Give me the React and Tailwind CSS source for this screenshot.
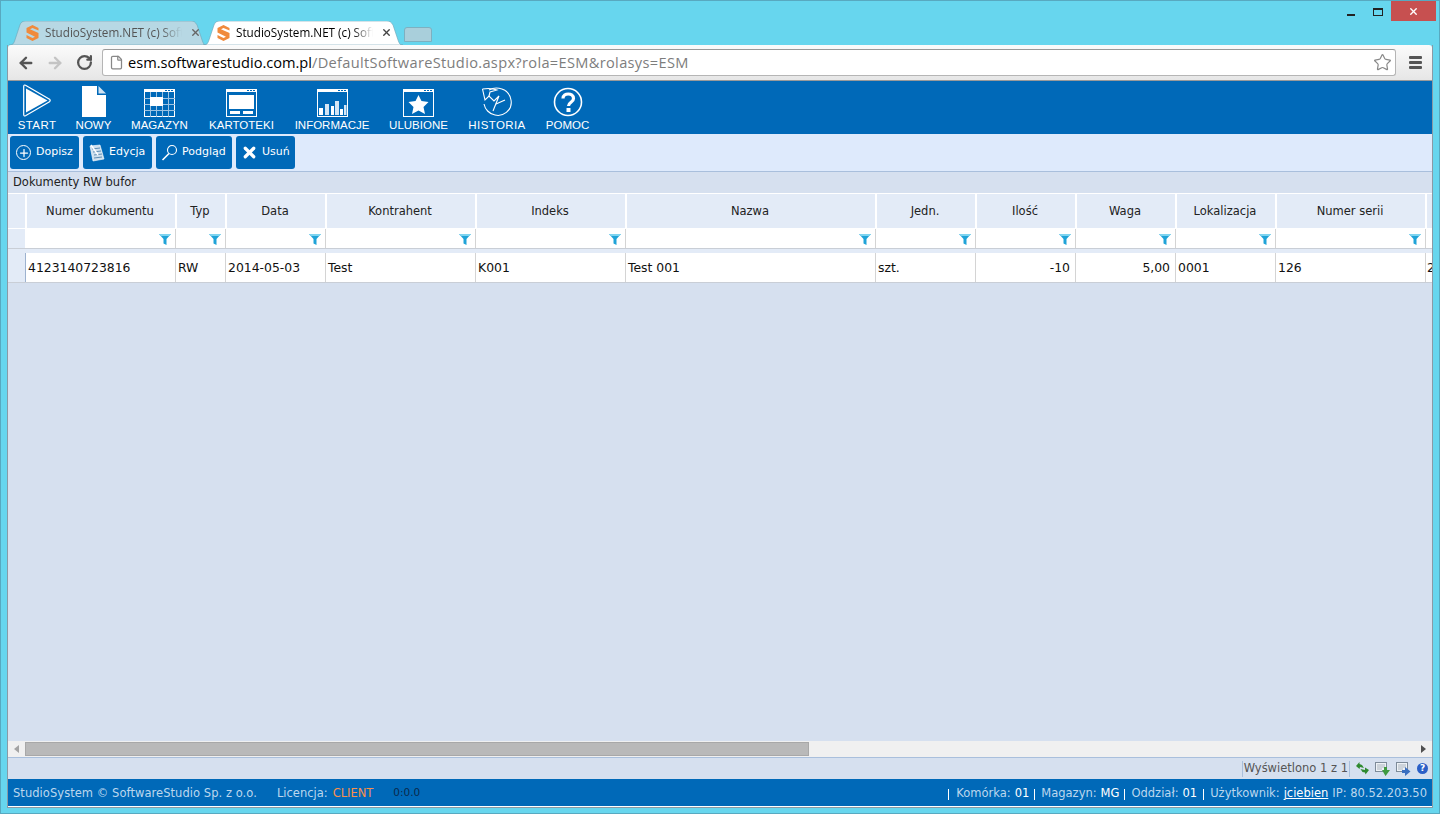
import { ArrowLeft, ArrowRight, RotateCw, File, Star, Plus, X } from "lucide-react"

const headCols = "grid grid-cols-[19px_150px_50px_100px_150px_150px_250px_100px_100px_100px_100px_150px_5px]"
const bodyCols = "grid grid-cols-[18px_150px_50px_100px_150px_150px_250px_100px_100px_100px_100px_150px_6px]"

const headers = ["Numer dokumentu", "Typ", "Data", "Kontrahent", "Indeks", "Nazwa", "Jedn.", "Ilość", "Waga", "Lokalizacja", "Numer serii"]

const row = [
    ["4123140723816", "left"],
    ["RW", "left"],
    ["2014-05-03", "left"],
    ["Test", "left"],
    ["K001", "left"],
    ["Test 001", "left"],
    ["szt.", "left"],
    ["-10", "right"],
    ["5,00", "right"],
    ["0001", "left"],
    ["126", "left"],
]

function Logo() {
    return (
        <svg width="13" height="16" viewBox="0 0 13 16" className="shrink-0">
            <path d="M0.5 7.5 L0.5 3 L6.5 0 L12.5 3 L12.5 5.5 L6.5 3 L4 4.2 L12.5 8 L12.5 13 L6.5 16 L0.5 13 L0.5 10 L6.5 13 L9 11.8 Z" fill="#f08a3c" />
        </svg>
    )
}

function Tab({ active, className }) {
    return (
        <div className={`relative flex items-center h-6 ${className}`}>
            <svg className="absolute inset-0 w-full h-full" viewBox="0 0 200 24" preserveAspectRatio="none">
                <path
                    d="M0 24 L1 24 C4 24 5 22 6 19 L11 4 C12 1 14 0 17 0 L184 0 C187 0 188 1 190 4 L195 19 C196 22 197 24 199 24 L200 24 Z"
                    fill={active ? "#ffffff" : "#b7d8e4"}
                    stroke="#6ea3b5"
                    strokeWidth="0.6"
                />
            </svg>
            <div className="relative flex items-center">
                <Logo />
                <span className={`ml-[6px] w-[137px] overflow-hidden whitespace-nowrap font-['Open_Sans',sans-serif] text-[11.7px] [mask-image:linear-gradient(to_right,black_85%,transparent)] ${active ? "text-black" : "text-[#555]"}`}>
                    StudioSystem.NET (c) SoftwareStudio
                </span>
                <X size={11} strokeWidth={3} className={`ml-[8px] ${active ? "text-[#444]" : "text-[#666]"}`} />
            </div>
        </div>
    )
}

function IconStart() {
    return (
        <svg width="28" height="33" viewBox="0 0 28 33">
            <path d="M2.5 1.2 L26.5 15.2 Q27.8 16.5 26.5 17.8 L2.5 31.8 Q0.7 32.5 0.7 30.5 L0.7 2.5 Q0.7 0.5 2.5 1.2 Z" fill="none" stroke="#fff" strokeWidth="1.2" />
            <path d="M3 4.5 L24.5 16.5 L3 28.5 Z" fill="#fff" />
        </svg>
    )
}

function IconNowy() {
    return (
        <svg width="24" height="31" viewBox="0 0 24 31">
            <path d="M0 0 L15 0 L15 9 L24 9 L24 31 L0 31 Z" fill="#fff" />
            <path d="M16.5 0 L24 7.5 L16.5 7.5 Z" fill="#cfe2f2" />
        </svg>
    )
}

function WindowFrame({ children }) {
    return (
        <svg width="31" height="28" viewBox="0 0 31 28">
            <rect x="0.5" y="0.5" width="30" height="27" fill="none" stroke="#fff" />
            <rect x="0" y="0" width="31" height="3" fill="#fff" />
            <rect x="21" y="1" width="2" height="1" fill="#0069b8" />
            <rect x="24" y="1" width="2" height="1" fill="#0069b8" />
            <rect x="27" y="1" width="2" height="1" fill="#0069b8" />
            {children}
        </svg>
    )
}

function IconMagazyn() {
    return (
        <WindowFrame>
            <path d="M0.5 9.5 H31 M0.5 15.5 H31 M0.5 21.5 H31 M6.5 3 V28 M12.5 3 V28 M18.5 3 V28 M24.5 3 V28" stroke="#9cc3e3" />
            <rect x="6" y="8" width="13" height="9" fill="#fff" />
        </WindowFrame>
    )
}

function IconKartoteki() {
    return (
        <WindowFrame>
            <rect x="3" y="6" width="25" height="14" fill="#fff" />
            <rect x="4" y="22" width="10" height="3" fill="#fff" />
            <rect x="17" y="22" width="10" height="3" fill="#fff" />
        </WindowFrame>
    )
}

function IconInformacje() {
    return (
        <WindowFrame>
            <path d="M2 26 V19 H6 V26 Z M14 26 V17 H17 V26 Z M23 26 V20 H26 V26 Z" fill="#fff" />
            <path d="M8 26 V15 H12 V26 Z M18 26 V12 H22 V26 Z M27 26 V16 H29.5 V26 Z" fill="#d5e6f5" />
        </WindowFrame>
    )
}

function IconUlubione() {
    return (
        <WindowFrame>
            <path d="M15.5 6 L18.5 12 L25.5 13 L20.5 18 L22 25 L15.5 21.5 L9 25 L10.5 18 L5.5 13 L12.5 12 Z" fill="#fff" />
        </WindowFrame>
    )
}

function IconHistoria() {
    return (
        <svg width="31" height="30" viewBox="0 0 31 30" fill="none" stroke="#fff" strokeWidth="1.1">
            <path d="M7 3 C14 -1 27 1 29 13 C31 24 20 30 13 28 C7 27 3 22 2 17" />
            <path d="M0.5 2 L3 13 L7 9 L12 14 L17 9 L11 24" />
            <path d="M0.5 2 C6 1 10 1 15 3 L8 5 L7 9" />
            <path d="M14 17 L23 13" />
        </svg>
    )
}

function IconPomoc() {
    return (
        <svg width="30" height="30" viewBox="0 0 30 30" fill="none">
            <circle cx="15" cy="15" r="13.5" stroke="#fff" strokeWidth="1.6" />
            <path d="M10 11.5 C10 5.5 20.5 5.5 20.5 11.5 C20.5 15.5 15.5 15 15.5 19" stroke="#fff" strokeWidth="3.2" />
            <rect x="13.5" y="21" width="4" height="4" fill="#fff" />
        </svg>
    )
}

const navItems = [
    { label: "START", icon: <IconStart />, width: "w-[38px]", text: "tracking-[0.4px]" },
    { label: "NOWY", icon: <IconNowy />, width: "w-[35px]", text: "" },
    { label: "MAGAZYN", icon: <IconMagazyn />, width: "w-[57px]", text: "" },
    { label: "KARTOTEKI", icon: <IconKartoteki />, width: "w-[67px]", text: "" },
    { label: "INFORMACJE", icon: <IconInformacje />, width: "w-[74px]", text: "" },
    { label: "ULUBIONE", icon: <IconUlubione />, width: "w-[59px]", text: "" },
    { label: "HISTORIA", icon: <IconHistoria />, width: "w-[58px]", text: "tracking-[0.4px]" },
    { label: "POMOC", icon: <IconPomoc />, width: "w-[43px]", text: "" },
]

function IconEdycja() {
    return (
        <svg width="16" height="18" viewBox="0 0 16 18">
            <path d="M1 2 L11 1 L15 15 L4 17 Z" fill="#cfe0ee" stroke="#fff" strokeWidth="0.6" />
            <path d="M3 5 L11 4 M4 8 L12 7 M5 11 L13 10 M5 14 L13 13" stroke="#5f8db3" />
            <path d="M2 1 L9 11" stroke="#fff" strokeWidth="1.4" />
        </svg>
    )
}

function IconPodglad() {
    return (
        <svg width="17" height="17" viewBox="0 0 17 17" fill="none" stroke="#fff">
            <circle cx="11" cy="6" r="4.5" strokeWidth="1.1" />
            <path d="M8 9.5 L1.5 16" strokeWidth="1.6" />
        </svg>
    )
}

function ActionButton({ icon, label, className }) {
    return (
        <button className={`flex items-center h-[33px] bg-[#0069b8] rounded-[3px] text-white font-['DejaVu_Sans',sans-serif] text-[11px] ${className}`}>
            {icon}
            <span>{label}</span>
        </button>
    )
}

function Funnel() {
    return (
        <svg width="12" height="11" viewBox="0 0 12 11" className="absolute right-[4px] top-[5px]">
            <path d="M0 0 H12 L7.5 5 V11 L4.5 9.5 V5 Z" fill="#1fa3d8" />
            <path d="M0 0 H12 L10.5 2 H1.5 Z" fill="#7fd4f0" />
        </svg>
    )
}

function IconRefresh() {
    return (
        <svg width="13" height="13" viewBox="0 0 13 13">
            <path d="M0 4 L3.5 0 L3.5 2 L6 3 L8 6 L4 5 L3.5 7 Z" fill="#2f8a2f" />
            <path d="M13 8 L9.5 12.5 L9 10.5 L6.5 10 L4.5 7 L9 8 L9 5.5 Z" fill="#2f8a2f" />
        </svg>
    )
}

function IconStatusDoc({ color, arrow }) {
    return (
        <svg width="15" height="14" viewBox="0 0 15 14">
            <rect x="0.5" y="0.5" width="11" height="9" fill="#eef2f6" stroke="#7d8b99" />
            <path d="M2 3 H10 M2 5 H10 M2 7 H7" stroke="#aab4be" />
            <path d={arrow} fill={color} />
        </svg>
    )
}

export default function App() {
    return (
        <div className="relative w-[1440px] h-[814px] overflow-hidden bg-[#67d6ee] border border-[#58a9c0] flex flex-col">
            <div className="absolute top-0 right-[3px] flex items-start">
                <div className="w-[8px] h-[2px] bg-[#222] mt-[13px] mr-[18px]" />
                <div className="w-[10px] h-[8px] border border-[#222] border-t-2 mt-[7px] mr-[8px]" />
                <div className="w-[45px] h-[20px] bg-[#c75050] flex items-center justify-center">
                    <X size={11} strokeWidth={3} className="text-white" />
                </div>
            </div>

            <div className="h-[44px] flex items-end pl-[8px] shrink-0">
                <Tab className="w-[198px] pl-[17px]" />
                <Tab active className="w-[200px] -ml-[4px] pl-[14px]" />
                <div className="w-[28px] h-[15px] mb-[3px] ml-[1px] bg-[#a9cfdb] border border-[#7db0c0] rounded-t-[3px] skew-x-[20px]" />
            </div>

            <div className="flex-1 mx-[6px] mb-[5px] flex flex-col border border-[#8a9aa5] border-t-0 min-h-0">
                <div className="h-[36px] shrink-0 bg-gradient-to-b from-[#fbfbfb] to-[#e6e6e6] rounded-t-[3px] flex items-center pl-[9px] pr-[10px] border-b border-[#9a9a9a]">
                    <ArrowLeft size={18} strokeWidth={3.2} className="text-[#555]" />
                    <ArrowRight size={18} strokeWidth={3.2} className="text-[#c4c4c4] ml-[11px]" />
                    <RotateCw size={17} strokeWidth={3.2} className="text-[#555] ml-[12px]" />
                    <div className="ml-[9px] flex-1 h-[27px] bg-white border border-[#b5b5b5] border-t-[#999] rounded-[3px] flex items-center pl-[6px] pr-[3px]">
                        <File size={15} className="text-[#888]" />
                        <span className="ml-[4px] font-['Open_Sans',sans-serif] text-[14.6px] text-black whitespace-nowrap">esm.softwarestudio.com.pl</span>
                        <span className="font-['Open_Sans',sans-serif] text-[14.6px] tracking-[0.33px] text-[#7d7d7d] whitespace-nowrap">/DefaultSoftwareStudio.aspx?rola=ESM&amp;rolasys=ESM</span>
                        <Star size={19} strokeWidth={1.5} className="ml-auto text-[#888]" />
                    </div>
                    <div className="ml-[13px] w-[13px] flex flex-col gap-[2px]">
                        <span className="h-[3px] bg-[#555] rounded-[1px]" />
                        <span className="h-[3px] bg-[#555] rounded-[1px]" />
                        <span className="h-[3px] bg-[#555] rounded-[1px]" />
                    </div>
                </div>

                <div className="h-[53px] shrink-0 bg-[#0069b8] flex gap-5 pl-[10px] font-['Liberation_Sans',sans-serif] text-[11.5px] text-white">
                    {navItems.map((item) => (
                        <div key={item.label} className={`flex flex-col items-center ${item.width}`}>
                            <div className="h-[38px] flex items-end pb-[2px]">{item.icon}</div>
                            <span className={`leading-[13px] whitespace-nowrap ${item.text}`}>{item.label}</span>
                        </div>
                    ))}
                </div>

                <div className="h-[38px] shrink-0 bg-[#deeafc] border-b border-[#a9bfdc] flex items-start gap-1 pl-[2px] pt-[2px]">
                    <ActionButton className="w-[69px] pl-[6px] gap-[5px]" label="Dopisz" icon={
                        <span className="w-[15px] h-[15px] rounded-full border border-white flex items-center justify-center"><Plus size={12} strokeWidth={2.5} /></span>
                    } />
                    <ActionButton className="w-[69px] pl-[6px] gap-[4px]" label="Edycja" icon={<IconEdycja />} />
                    <ActionButton className="w-[76px] pl-[5px] gap-[4px]" label="Podgląd" icon={<IconPodglad />} />
                    <ActionButton className="w-[59px] pl-[5px] gap-[4px]" label="Usuń" icon={<X size={17} strokeWidth={4.5} />} />
                </div>

                <div className="flex-1 min-h-0 bg-[#d6e0ef] flex flex-col font-['DejaVu_Sans',sans-serif]">
                    <div className="h-[21px] shrink-0 pl-[5px] pt-[1px] flex items-center text-[11.5px] text-[#222]">Dokumenty RW bufor</div>

                    <div className="flex-1 min-h-0 overflow-hidden">
                        <div className={`${headCols} h-[35px] border-t border-white text-[11.5px] text-[#222]`}>
                            <div className="bg-[#e3ebf7] border-r-2 border-white" />
                            {headers.map((h) => (
                                <div key={h} className="bg-[#e3ebf7] border-r-2 border-white flex items-center justify-center pt-[2px] pr-[2px]">{h}</div>
                            ))}
                            <div className="bg-[#e3ebf7]" />
                        </div>
                        <div className={`${bodyCols} h-[21px] border-t border-white border-b border-b-[#c9ced6]`}>
                            <div className="bg-[#e3ebf7] border-r border-white" />
                            {headers.map((h) => (
                                <div key={h} className="relative bg-white border-r border-[#d4d4d4]"><Funnel /></div>
                            ))}
                            <div className="bg-white" />
                        </div>
                        <div className="h-[4px] bg-[#e3ebf7]" />
                        <div className={`${bodyCols} h-[30px] border-b border-[#c9ced6] text-[12.4px] text-[#111]`}>
                            <div className="bg-[#e3ebf7] border-r border-[#9db2cf]" />
                            {row.map(([v, align]) => (
                                <div key={v} className={`bg-white border-r border-[#d4d4d4] flex items-center pt-[1px] ${align === "right" ? "justify-end pr-[5px]" : "pl-[2px]"}`}>{v}</div>
                            ))}
                            <div className="bg-white pl-[1px] flex items-center overflow-hidden pt-[1px]">2</div>
                        </div>
                    </div>

                    <div className="h-[17px] shrink-0 bg-[#f0f0f0] flex items-center border-b border-[#a9bfdc]">
                        <div className="w-[17px] flex justify-center">
                            <span className="w-0 h-0 border-y-[4px] border-y-transparent border-r-[5px] border-r-[#a3a3a3]" />
                        </div>
                        <div className="w-[784px] h-[14px] bg-[#b9b9b9] border border-[#a8a8a8]" />
                        <div className="ml-auto w-[17px] flex justify-center">
                            <span className="w-0 h-0 border-y-[4px] border-y-transparent border-l-[5px] border-l-[#505050]" />
                        </div>
                    </div>

                    <div className="h-[21px] shrink-0 flex items-center justify-end pr-[4px]">
                        <div className="h-[16px] border-x border-[#a9bfdc] pl-[1px] pr-[1px] flex items-center text-[11.5px] text-[#555]">Wyświetlono 1 z 1</div>
                        <div className="ml-[6px] flex items-center gap-[6px]">
                            <IconRefresh />
                            <IconStatusDoc color="#3f9a3f" arrow="M7 8 H9 V5 H12 V8 H15 L10.5 14 Z" />
                            <IconStatusDoc color="#3a6fc0" arrow="M6 8 H9 V5 L14.5 9.5 L9 14 V11 H6 Z" />
                            <span className="w-[11px] h-[11px] rounded-full bg-[#2a5fc7] flex items-center justify-center text-[9px] font-bold text-white leading-none">?</span>
                        </div>
                    </div>

                    <div className="h-[28px] shrink-0 bg-[#0069b8] flex items-center pl-[5px] pr-[5px] pt-[3px] text-[11.5px] text-[#bcd7ee] border-b border-white">
                        <span className="tracking-[0.05px]">StudioSystem © SoftwareStudio Sp. z o.o.</span>
                        <span className="ml-[20px]">Licencja:</span>
                        <span className="ml-[5px] text-[#f9904a]">CLIENT</span>
                        <span className="ml-[20px] -mt-[2px] text-[10.5px] text-[#0a2a4d]">0:0.0</span>
                        <div className="ml-auto flex items-center">
                            <span className="border-l border-white pl-[7px] h-[11px] flex items-center">Komórka: <b className="ml-1 font-normal text-white">01</b></span>
                            <span className="ml-[5px] border-l border-white pl-[6px] h-[11px] flex items-center">Magazyn: <b className="ml-1 font-normal text-white">MG</b></span>
                            <span className="ml-[5px] border-l border-white pl-[6px] h-[11px] flex items-center">Oddział: <b className="ml-1 font-normal text-white">01</b></span>
                            <span className="ml-[6px] border-l border-white pl-[6px] h-[11px] flex items-center">Użytkownik:</span>
                            <a className="ml-1 underline text-white">jciebien</a>
                            <span className="ml-1">IP: 80.52.203.50</span>
                        </div>
                    </div>
                </div>
            </div>
        </div>
    )
}
